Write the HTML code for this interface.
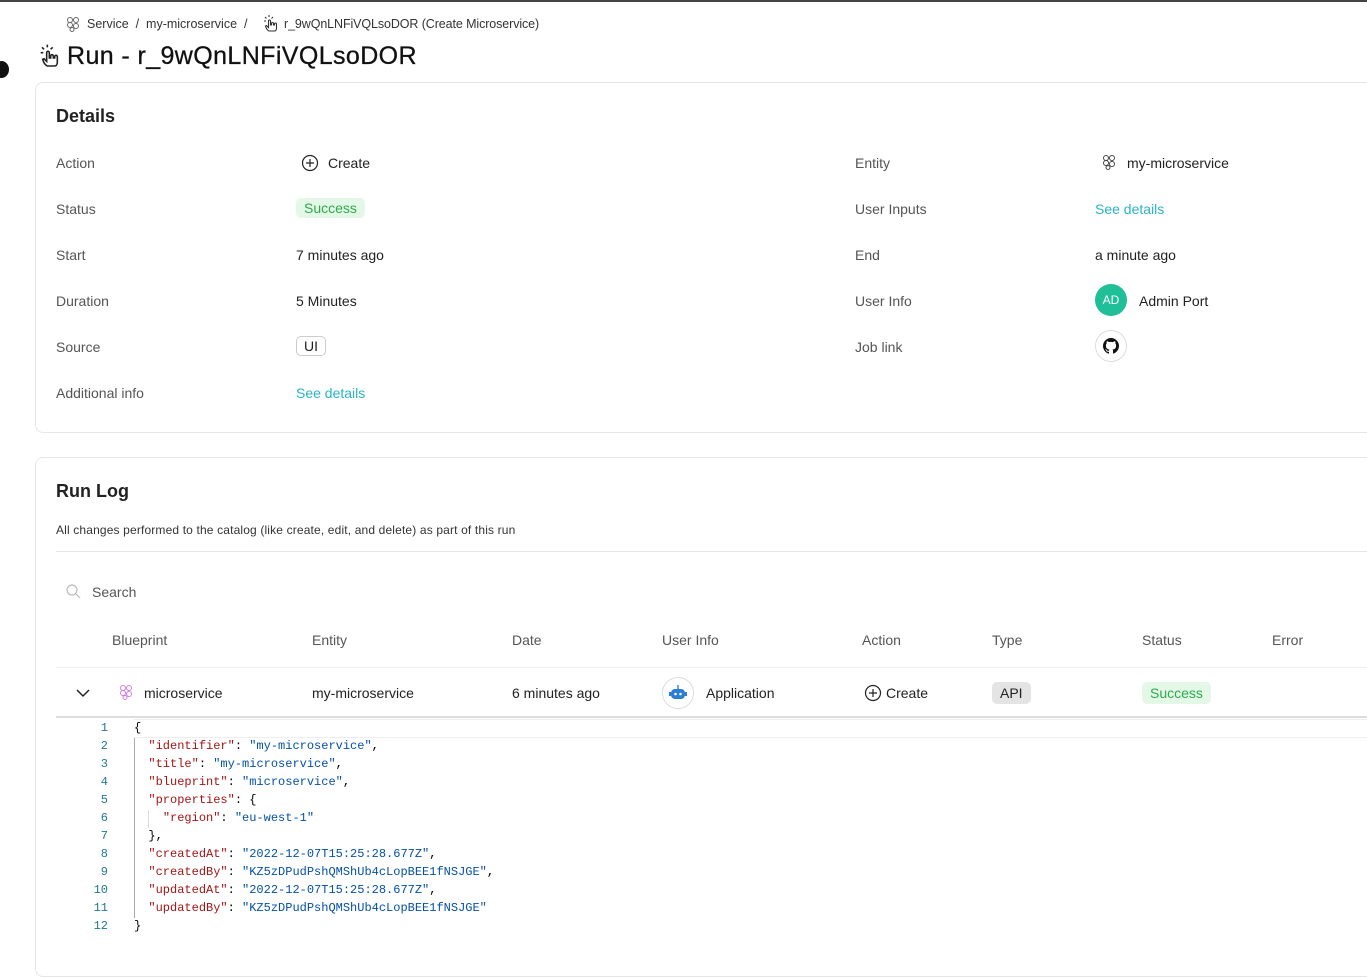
<!DOCTYPE html>
<html><head><meta charset="utf-8"><style>
*{margin:0;padding:0;box-sizing:border-box}
body{width:1367px;height:947px;overflow:hidden;background:#fff;font-family:"Liberation Sans",sans-serif;color:#1f1f1f;position:relative}
.a{position:absolute;white-space:nowrap}
.lbl{font-size:14px;color:#555}
.val{font-size:14px;color:#222}
.card{position:absolute;left:35px;width:1340px;border:1px solid #e6e6e6;border-radius:8px;background:#fff}
.link{color:#2bb3c8;font-size:14px}
.pill{display:inline-block;border-radius:5px;padding:2px 8px;font-size:14px}
.code{font-family:"Liberation Mono",monospace;font-size:12px;line-height:18px}
.k{color:#a31515}.s{color:#0451a5}
.ln{color:#237893;text-align:right;width:40px}
</style></head><body>
<div class="a" style="left:0;top:0;width:1367px;height:2px;background:#444"></div>
<div class="a" style="left:-6px;top:61px;width:15px;height:17px;border-radius:50%;background:#111"></div>

<svg class="a" style="left:66px;top:16px" width="14" height="16" viewBox="0 0 14 16" fill="none" stroke="#666" stroke-width="1"><circle cx="4" cy="4" r="2.5"/><circle cx="10" cy="4" r="2.5"/><circle cx="4" cy="9" r="2.5"/><circle cx="10" cy="10" r="2.5"/><circle cx="6" cy="13.5" r="2"/></svg>
<div class="a" style="left:87px;top:17px;font-size:12.5px;color:#333">Service &nbsp;/ &nbsp;my-microservice &nbsp;/</div>
<svg class="a" style="left:262px;top:14px" width="18" height="19" viewBox="0 0 18 19" fill="none" stroke="#333" stroke-width="1.1"><path d="M7 1v2M3 3l1.5 1.5M11 3L9.5 4.5M2 7h2"/><path d="M7 17c-2-1-3-3-3.5-5l1-.5 2 2V7a1 1 0 012 0v4h1V9.5a1 1 0 012 0V11h1v-1a1 1 0 012 0V14c0 2-1 3-2 3z"/></svg>
<div class="a" style="left:284px;top:17px;font-size:12.5px;color:#333;letter-spacing:-0.1px">r_9wQnLNFiVQLsoDOR (Create Microservice)</div>

<svg class="a" style="left:38px;top:43px" width="24" height="26" viewBox="0 0 18 19" fill="none" stroke="#222" stroke-width="1.2"><path d="M7 1v2M3 3l1.5 1.5M11 3L9.5 4.5M2 7h2"/><path d="M7 17c-2-1-3-3-3.5-5l1-.5 2 2V7a1 1 0 012 0v4h1V9.5a1 1 0 012 0V11h1v-1a1 1 0 012 0V14c0 2-1 3-2 3z"/></svg>
<div class="a" style="left:67px;top:42px;font-size:25px;font-weight:500;color:#111;letter-spacing:0.4px;-webkit-text-stroke:0.3px #111">Run - r_9wQnLNFiVQLsoDOR</div>

<div class="card" style="top:82px;height:351px"></div>
<div class="a" style="left:56px;top:106px;font-size:18px;font-weight:600;color:#222">Details</div>

<div class="a lbl" style="left:56px;top:155px">Action</div>
<svg class="a" style="left:301px;top:154px" width="18" height="18" viewBox="0 0 18 18" fill="none" stroke="#222" stroke-width="1.2"><circle cx="9" cy="9" r="7.5"/><path d="M9 5v8M5 9h8"/></svg>
<div class="a val" style="left:328px;top:155px">Create</div>
<div class="a lbl" style="left:56px;top:201px">Status</div>
<div class="a pill" style="left:296px;top:198px;background:#e3f8e7;color:#2eaa4b">Success</div>
<div class="a lbl" style="left:56px;top:247px">Start</div>
<div class="a val" style="left:296px;top:247px">7 minutes ago</div>
<div class="a lbl" style="left:56px;top:293px">Duration</div>
<div class="a val" style="left:296px;top:293px">5 Minutes</div>
<div class="a lbl" style="left:56px;top:339px">Source</div>
<div class="a pill" style="left:296px;top:336px;border:1px solid #ccc;padding:1px 7px">UI</div>
<div class="a lbl" style="left:56px;top:385px">Additional info</div>
<div class="a link" style="left:296px;top:385px">See details</div>

<div class="a lbl" style="left:855px;top:155px">Entity</div>
<svg class="a" style="left:1102px;top:154px" width="14" height="16" viewBox="0 0 14 16" fill="none" stroke="#444" stroke-width="1"><circle cx="4" cy="4" r="2.5"/><circle cx="10" cy="4" r="2.5"/><circle cx="4" cy="9" r="2.5"/><circle cx="10" cy="10" r="2.5"/><circle cx="6" cy="13.5" r="2"/></svg>
<div class="a val" style="left:1127px;top:155px">my-microservice</div>
<div class="a lbl" style="left:855px;top:201px">User Inputs</div>
<div class="a link" style="left:1095px;top:201px">See details</div>
<div class="a lbl" style="left:855px;top:247px">End</div>
<div class="a val" style="left:1095px;top:247px">a minute ago</div>
<div class="a lbl" style="left:855px;top:293px">User Info</div>
<div class="a" style="left:1095px;top:284px;width:32px;height:32px;border-radius:50%;background:#1fbf98;color:#fff;font-size:12px;text-align:center;line-height:32px">AD</div>
<div class="a val" style="left:1139px;top:293px">Admin Port</div>
<div class="a lbl" style="left:855px;top:339px">Job link</div>
<div class="a" style="left:1095px;top:330px;width:32px;height:32px;border-radius:50%;border:1px solid #ddd"></div>
<svg class="a" style="left:1103px;top:338px" width="16" height="16" viewBox="0 0 16 16"><path fill="#111" d="M8 0C3.58 0 0 3.58 0 8c0 3.54 2.29 6.53 5.470 7.59.4.07.55-.17.55-.38 0-.19-.01-.82-.01-1.49-2.01.37-2.53-.49-2.690-.94-.09-.23-.48-.94-.82-1.13-.28-.15-.68-.52-.01-.53.63-.01 1.08.58 1.23.82.72 1.21 1.87.87 2.33.66.07-.52.28-.87.51-1.070-1.78-.2-3.64-.89-3.64-3.95 0-.87.31-1.59.82-2.15-.08-.2-.36-1.02.08-2.12 0 0 .67-.21 2.2.82.64-.18 1.32-.27 2-.27.68 0 1.36.09 2 .27 1.53-1.04 2.2-.82 2.2-.82.44 1.1.16 1.92.08 2.12.51.56.82 1.27.82 2.15 0 3.07-1.87 3.75-3.65 3.95.29.25.54.73.54 1.48 0 1.07-.01 1.93-.01 2.2 0 .21.15.46.55.38A8.013 8.013 0 0016 8c0-4.42-3.58-8-8-8z"/></svg>

<div class="card" style="top:457px;height:520px"></div>
<div class="a" style="left:56px;top:481px;font-size:18px;font-weight:600;color:#222">Run Log</div>
<div class="a" style="left:56px;top:523px;font-size:12px;color:#333;letter-spacing:0.15px">All changes performed to the catalog (like create, edit, and delete) as part of this run</div>
<div class="a" style="left:56px;top:551px;width:1320px;height:1px;background:#e6e6e6"></div>
<svg class="a" style="left:66px;top:584px" width="15" height="15" viewBox="0 0 15 15" fill="none" stroke="#bbb" stroke-width="1.2"><circle cx="6" cy="6" r="5"/><path d="M10 10l4 4"/></svg>
<div class="a" style="left:92px;top:584px;font-size:14px;color:#555">Search</div>

<div class="a lbl" style="left:112px;top:632px">Blueprint</div>
<div class="a lbl" style="left:312px;top:632px">Entity</div>
<div class="a lbl" style="left:512px;top:632px">Date</div>
<div class="a lbl" style="left:662px;top:632px">User Info</div>
<div class="a lbl" style="left:862px;top:632px">Action</div>
<div class="a lbl" style="left:992px;top:632px">Type</div>
<div class="a lbl" style="left:1142px;top:632px">Status</div>
<div class="a lbl" style="left:1272px;top:632px">Error</div>
<div class="a" style="left:56px;top:667px;width:1320px;height:1px;background:#eee"></div>

<svg class="a" style="left:76px;top:688px" width="14" height="10" viewBox="0 0 14 10" fill="none" stroke="#222" stroke-width="1.5"><path d="M1 2l6 6 6-6"/></svg>
<svg class="a" style="left:119px;top:684px" width="14" height="16" viewBox="0 0 14 16" fill="none" stroke="#d27de8" stroke-width="1"><circle cx="4" cy="4" r="2.5"/><circle cx="10" cy="4" r="2.5"/><circle cx="4" cy="9" r="2.5"/><circle cx="10" cy="10" r="2.5"/><circle cx="6" cy="13.5" r="2"/></svg>
<div class="a val" style="left:144px;top:685px">microservice</div>
<div class="a val" style="left:312px;top:685px">my-microservice</div>
<div class="a val" style="left:512px;top:685px">6 minutes ago</div>
<div class="a" style="left:662px;top:677px;width:32px;height:32px;border-radius:50%;border:1px solid #ddd"></div>
<svg class="a" style="left:668px;top:684px" width="20" height="18" viewBox="0 0 20 18"><rect x="9.3" y="1" width="1.4" height="4" fill="#2a7fd4"/><rect x="3" y="5" width="14" height="10" rx="4" fill="#2a7fd4"/><rect x="1" y="8" width="2" height="4" fill="#2a7fd4"/><rect x="17" y="8" width="2" height="4" fill="#2a7fd4"/><circle cx="7.5" cy="10" r="1.3" fill="#fff"/><circle cx="12.5" cy="10" r="1.3" fill="#fff"/></svg>
<div class="a val" style="left:706px;top:685px">Application</div>
<svg class="a" style="left:864px;top:684px" width="18" height="18" viewBox="0 0 18 18" fill="none" stroke="#222" stroke-width="1.2"><circle cx="9" cy="9" r="7.5"/><path d="M9 5v8M5 9h8"/></svg>
<div class="a val" style="left:886px;top:685px">Create</div>
<div class="a pill" style="left:992px;top:682px;background:#e4e4e4;color:#222;padding:3px 8px">API</div>
<div class="a pill" style="left:1142px;top:682px;background:#e3f8e7;color:#2eaa4b;padding:3px 8px">Success</div>
<div class="a" style="left:56px;top:716px;width:1320px;height:2px;background:#ddd"></div>

<div class="a" style="left:134px;top:719px;width:1240px;height:19px;border:1px solid #eee;border-left:none"></div>
<div class="a" style="left:134px;top:738px;width:1px;height:180px;background:#aaa"></div>
<div class="a" style="left:148px;top:810px;width:1px;height:18px;background:#ddd"></div>
<div class="a code ln" style="left:68px;top:719px">1<br>2<br>3<br>4<br>5<br>6<br>7<br>8<br>9<br>10<br>11<br>12</div>
<div class="a code" style="left:134px;top:719px;color:#000">{<br>
&nbsp;&nbsp;<span class="k">"identifier"</span>: <span class="s">"my-microservice"</span>,<br>
&nbsp;&nbsp;<span class="k">"title"</span>: <span class="s">"my-microservice"</span>,<br>
&nbsp;&nbsp;<span class="k">"blueprint"</span>: <span class="s">"microservice"</span>,<br>
&nbsp;&nbsp;<span class="k">"properties"</span>: {<br>
&nbsp;&nbsp;&nbsp;&nbsp;<span class="k">"region"</span>: <span class="s">"eu-west-1"</span><br>
&nbsp;&nbsp;},<br>
&nbsp;&nbsp;<span class="k">"createdAt"</span>: <span class="s">"2022-12-07T15:25:28.677Z"</span>,<br>
&nbsp;&nbsp;<span class="k">"createdBy"</span>: <span class="s">"KZ5zDPudPshQMShUb4cLopBEE1fNSJGE"</span>,<br>
&nbsp;&nbsp;<span class="k">"updatedAt"</span>: <span class="s">"2022-12-07T15:25:28.677Z"</span>,<br>
&nbsp;&nbsp;<span class="k">"updatedBy"</span>: <span class="s">"KZ5zDPudPshQMShUb4cLopBEE1fNSJGE"</span><br>
}</div>
</body></html>
